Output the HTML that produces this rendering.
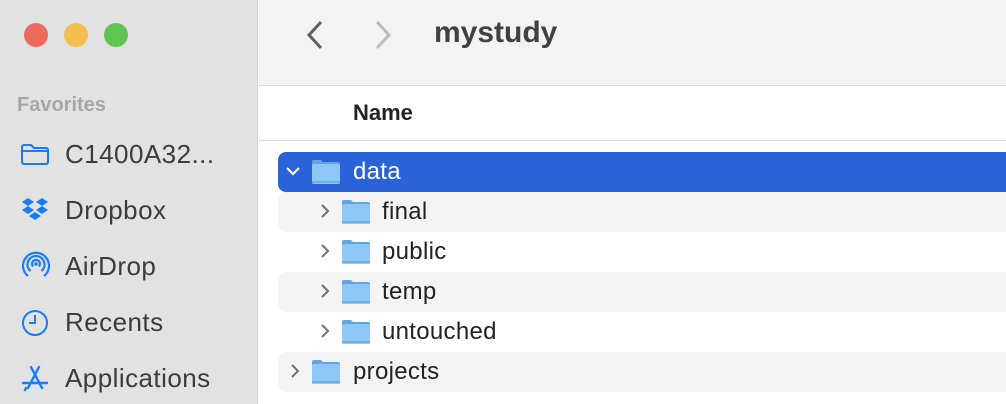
<!DOCTYPE html>
<html><head><style>
*{margin:0;padding:0;box-sizing:border-box}
body{width:1006px;height:404px;overflow:hidden;background:#fff;font-family:"Liberation Sans",Helvetica,Arial,sans-serif;position:relative}
.side{position:absolute;left:0;top:0;width:258px;height:404px;background:#e2e2e2;border-right:1px solid #d6d6d6}
.tl{position:absolute;top:23px;width:24px;height:24px;border-radius:50%}
.fav{position:absolute;left:17px;top:94px;font-size:20px;font-weight:bold;color:#a6a6a6}
.item{position:absolute;left:0;height:40px;width:258px;font-size:26px;letter-spacing:0.45px;color:#3c3c3c}
.item svg{position:absolute;left:20px;top:6px}
.item span{position:absolute;left:65px;top:5px}
.tool{position:absolute;left:259px;top:0;right:0;height:86px;background:#f3f3f3;border-bottom:1px solid #dcdcdc}
.title{position:absolute;left:434px;top:16px;font-size:30px;font-weight:bold;color:#414141}
.hdr{position:absolute;left:259px;top:87px;right:0;height:54px;border-bottom:1px solid #dedede;background:#fff}
.hdr span{position:absolute;left:94px;top:13px;font-size:22px;font-weight:bold;color:#222}
.row{position:absolute;left:278px;right:0;height:40px;font-size:24px;letter-spacing:0.3px;color:#222}
.row.s{background:#f4f4f4;border-radius:8px 0 0 8px}
.row.sel{background:#2a63d9;color:#fff;border-radius:8px 0 0 8px}
.row .t{position:absolute;top:6px}
.row .ch{position:absolute;top:12px}
.row .f{position:absolute;top:6px}
</style></head><body>
<div class="side">
<div class="tl" style="left:24px;background:#ec6a5e"></div>
<div class="tl" style="left:64px;background:#f4bf4f"></div>
<div class="tl" style="left:104px;background:#61c554"></div>
<div class="fav">Favorites</div>
<div class="item" style="top:134px"><svg width="32" height="28" viewBox="0 0 32 28"><path d="M2 6 V22 a2 2 0 0 0 2 2 H26 a2 2 0 0 0 2-2 V10 a2 2 0 0 0-2-2 H14 L11 5 H4 a2 2 0 0 0-2 2 Z M2 11 H28" fill="none" stroke="#1a7cf3" stroke-width="2"/></svg><span>C1400A32...</span></div>
<div class="item" style="top:190px"><svg width="32" height="28" viewBox="0 0 32 28"><path d="M8 2 L14 6 L8 10 L2 6Z M22 2 L28 6 L22 10 L16 6Z M8 10 L14 14 L8 18 L2 14Z M22 10 L28 14 L22 18 L16 14Z M15 16 L21 20 L15 24 L9 20Z" fill="#1a7cf3"/></svg><span>Dropbox</span></div>
<div class="item" style="top:246px"><svg width="32" height="32" viewBox="0 0 32 32" style="top:3px"><g fill="none" stroke="#1a7cf3" stroke-width="2.2"><path d="M8 27 A13 13 0 1 1 24 27"/><path d="M10.5 22 A8.5 8.5 0 1 1 21.5 22"/><path d="M13 17.5 A4 4 0 1 1 19 17.5"/></g><circle cx="16" cy="15" r="1.8" fill="#1a7cf3"/></svg><span>AirDrop</span></div>
<div class="item" style="top:302px"><svg width="32" height="30" viewBox="0 0 32 30"><circle cx="15" cy="15" r="12" fill="none" stroke="#1a7cf3" stroke-width="2"/><path d="M15 7 V15 H9" fill="none" stroke="#1a7cf3" stroke-width="2"/></svg><span>Recents</span></div>
<div class="item" style="top:358px"><svg width="32" height="30" viewBox="0 0 32 30"><g fill="none" stroke="#1a7cf3" stroke-width="2.4" stroke-linecap="round"><path d="M11 3 L22 24 M19 3 L8 24 M3 19 H27 M6 24 L5 26"/></g></svg><span>Applications</span></div>
</div>
<div class="tool">
<svg style="position:absolute;left:44px;top:20px" width="24" height="30" viewBox="0 0 24 30"><path d="M18 2 L6 15 L18 28" fill="none" stroke="#606060" stroke-width="3"/></svg>
<svg style="position:absolute;left:112px;top:20px" width="24" height="30" viewBox="0 0 24 30"><path d="M6 2 L18 15 L6 28" fill="none" stroke="#bdbdbd" stroke-width="3"/></svg>
</div>
<div class="title">mystudy</div>
<div class="hdr"><span>Name</span></div>

<svg width="0" height="0" style="position:absolute"><defs>
<g id="fd"><path d="M1 4 a2 2 0 0 1 2-2 H10 L12 4 H27 a2 2 0 0 1 2 2 V24 a2 2 0 0 1-2 2 H3 a2 2 0 0 1-2-2Z" fill="#5ea6e6"/><path d="M1 8 a2 2 0 0 1 2-2 H27 a2 2 0 0 1 2 2 V24 a2 2 0 0 1-2 2 H3 a2 2 0 0 1-2-2Z" fill="#8cc7f5"/><path d="M1 24 H29" stroke="#5a9ad8" stroke-width="1"/></g>
</defs></svg>

<div class="row sel" style="top:152px"><svg class="ch" style="left:8px;top:14px" width="14" height="10" viewBox="0 0 14 10"><path d="M1 2 L7 8 L13 2" fill="none" stroke="#fff" stroke-width="2.2"/></svg><svg class="f" style="left:33px" width="30" height="28"><use href="#fd"/></svg><span class="t" style="left:75px">data</span></div>
<div class="row s" style="top:192px"><svg class="ch" style="left:42px;top:12px" width="10" height="14" viewBox="0 0 10 14"><path d="M2 1 L8 7 L2 13" fill="none" stroke="#707070" stroke-width="2"/></svg><svg class="f" style="left:63px" width="30" height="28"><use href="#fd"/></svg><span class="t" style="left:104px">final</span></div>
<div class="row" style="top:232px"><svg class="ch" style="left:42px;top:12px" width="10" height="14" viewBox="0 0 10 14"><path d="M2 1 L8 7 L2 13" fill="none" stroke="#707070" stroke-width="2"/></svg><svg class="f" style="left:63px" width="30" height="28"><use href="#fd"/></svg><span class="t" style="left:104px">public</span></div>
<div class="row s" style="top:272px"><svg class="ch" style="left:42px;top:12px" width="10" height="14" viewBox="0 0 10 14"><path d="M2 1 L8 7 L2 13" fill="none" stroke="#707070" stroke-width="2"/></svg><svg class="f" style="left:63px" width="30" height="28"><use href="#fd"/></svg><span class="t" style="left:104px">temp</span></div>
<div class="row" style="top:312px"><svg class="ch" style="left:42px;top:12px" width="10" height="14" viewBox="0 0 10 14"><path d="M2 1 L8 7 L2 13" fill="none" stroke="#707070" stroke-width="2"/></svg><svg class="f" style="left:63px" width="30" height="28"><use href="#fd"/></svg><span class="t" style="left:104px">untouched</span></div>
<div class="row s" style="top:352px"><svg class="ch" style="left:12px;top:12px" width="10" height="14" viewBox="0 0 10 14"><path d="M2 1 L8 7 L2 13" fill="none" stroke="#707070" stroke-width="2"/></svg><svg class="f" style="left:33px" width="30" height="28"><use href="#fd"/></svg><span class="t" style="left:75px">projects</span></div>
</body></html>
